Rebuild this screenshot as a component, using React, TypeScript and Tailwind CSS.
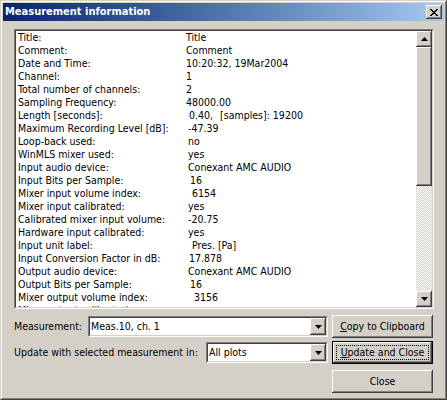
import type { ReactNode } from "react";

// Classic Windows "Measurement information" dialog.

const FONT = "font-['DejaVu_Sans_Condensed','DejaVu_Sans',sans-serif]";

const rows: { label: string; value: ReactNode; pad: string }[] = [
  { label: "Title:", value: "Title", pad: "pl-0" },
  { label: "Comment:", value: "Comment", pad: "pl-0" },
  { label: "Date and Time:", value: "10:20:32, 19Mar2004", pad: "pl-0" },
  { label: "Channel:", value: "1", pad: "pl-0" },
  { label: "Total number of channels:", value: "2", pad: "pl-0" },
  { label: "Sampling Frequency:", value: "48000.00", pad: "pl-0" },
  {
    label: "Length [seconds]:",
    value: (
      <>
        0.40,<span className="ml-[7px]">[samples]: 19200</span>
      </>
    ),
    pad: "pl-[3px]",
  },
  { label: "Maximum Recording Level [dB]:", value: "-47.39", pad: "pl-[2px]" },
  { label: "Loop-back used:", value: "no", pad: "pl-[2px]" },
  { label: "WinMLS mixer used:", value: "yes", pad: "pl-[2px]" },
  { label: "Input audio device:", value: "Conexant AMC AUDIO", pad: "pl-[2px]" },
  { label: "Input Bits per Sample:", value: "16", pad: "pl-[4px]" },
  { label: "Mixer input volume index:", value: "6154", pad: "pl-[6px]" },
  { label: "Mixer input calibrated:", value: "yes", pad: "pl-[2px]" },
  { label: "Calibrated mixer input volume:", value: "-20.75", pad: "pl-[2px]" },
  { label: "Hardware input calibrated:", value: "yes", pad: "pl-[2px]" },
  { label: "Input unit label:", value: "Pres. [Pa]", pad: "pl-[6px]" },
  { label: "Input Conversion Factor in dB:", value: "17.878", pad: "pl-[3px]" },
  { label: "Output audio device:", value: "Conexant AMC AUDIO", pad: "pl-[2px]" },
  { label: "Output Bits per Sample:", value: "16", pad: "pl-[4px]" },
  { label: "Mixer output volume index:", value: "3156", pad: "pl-[8px]" },
  { label: "Mixer output calibrated:", value: "yes", pad: "pl-[2px]" },
];

const RAISED =
  "bg-[#d4d0c8] shadow-[inset_-1px_-1px_#404040,inset_1px_1px_#ffffff,inset_-2px_-2px_#808080,inset_2px_2px_#d4d0c8]";

function Arrow({ up = false }: { up?: boolean }) {
  return (
    <svg width="7" height="4" viewBox="0 0 7 4" className="block">
      {up ? <path d="M3.5 0 L7 4 L0 4 Z" fill="#000" /> : <path d="M0 0 L7 0 L3.5 4 Z" fill="#000" />}
    </svg>
  );
}

function Sunken({ className, children }: { className?: string; children: ReactNode }) {
  return (
    <div className={`border border-t-[#808080] border-l-[#808080] border-b-[#ffffff] border-r-[#ffffff] ${className ?? ""}`}>
      <div className="flex h-full w-full border border-t-[#404040] border-l-[#404040] border-b-[#d4d0c8] border-r-[#d4d0c8] bg-white">
        {children}
      </div>
    </div>
  );
}

function Combo({ width, value }: { width: string; value: string }) {
  return (
    <Sunken className={`${width} h-[21px]`}>
      <span className="flex-1 pl-[1px] leading-[17px]">{value}</span>
      <div className={`${RAISED} flex h-[17px] w-[16px] items-center justify-center`}>
        <Arrow />
      </div>
    </Sunken>
  );
}

function Button({ children, isDefault = false }: { children: ReactNode; isDefault?: boolean }) {
  if (isDefault)
    return (
      <div className="h-[23px] w-[101px] border border-black">
        <div className={`${RAISED} flex h-full w-full items-center justify-center p-[3px]`}>
          <div className="flex h-full w-full items-center justify-center border border-dotted border-black">
            {children}
          </div>
        </div>
      </div>
    );
  return (
    <div className={`${RAISED} flex h-[23px] w-[101px] items-center justify-center`}>{children}</div>
  );
}

export default function App() {
  return (
    <div
      className={`${FONT} h-[400px] w-[447px] border border-t-[#d4d0c8] border-l-[#d4d0c8] border-b-[#404040] border-r-[#404040] text-[10.5px] text-black`}
    >
      <div className="h-full w-full border border-t-[#ffffff] border-l-[#ffffff] border-b-[#808080] border-r-[#808080] bg-[#d4d0c8] p-px">
        {/* Title bar */}
        <div className="flex h-[18px] items-center justify-between bg-gradient-to-r from-[#0a246a] to-[#a6caf0] pl-[2px] pr-[2px]">
          <span className="text-[11px] font-bold text-white">Measurement information</span>
          <div className={`${RAISED} flex h-[14px] w-[16px] items-center justify-center`}>
            <svg width="8" height="7" viewBox="0 0 8 7" className="block">
              <path d="M0 0h2v1h-2zM6 0h2v1h-2zM1 1h2v1h-2zM5 1h2v1h-2zM2 2h4v1h-4zM3 3h2v1h-2zM2 4h4v1h-4zM1 5h2v1h-2zM5 5h2v1h-2zM0 6h2v1h-2zM6 6h2v1h-2z" fill="#000" />
            </svg>
          </div>
        </div>

        <div className="pl-[11px] pt-[8px]">
          {/* Info list */}
          <Sunken className="h-[280px] w-[420px]">
            <div className="flex-1 overflow-hidden">
              {rows.map((r) => (
                <div key={r.label} className="flex h-[13px] items-center whitespace-nowrap leading-[13px]">
                  <span className="w-[170px] shrink-0 pl-[2px]">{r.label}</span>
                  <span className={r.pad}>{r.value}</span>
                </div>
              ))}
            </div>
            <div className="flex w-[16px] flex-col">
              <div className={`${RAISED} flex h-[16px] items-center justify-center`}>
                <Arrow up />
              </div>
              <div className={`${RAISED} h-[139px]`} />
              <div className="flex-1 bg-[repeating-conic-gradient(#d4d0c8_0%_25%,#ffffff_0%_50%)] bg-[length:2px_2px]" />
              <div className={`${RAISED} flex h-[16px] items-center justify-center`}>
                <Arrow />
              </div>
            </div>
          </Sunken>

          {/* Controls */}
          <div className="mt-[6px] flex h-[23px] w-[419px] items-center">
            <span>Measurement:</span>
            <div className="ml-auto">
              <Combo width="w-[240px]" value="Meas.10, ch. 1" />
            </div>
            <div className="ml-[4px]">
              <Button>
                <span>
                  <span className="underline">C</span>opy to Clipboard
                </span>
              </Button>
            </div>
          </div>

          <div className="mt-[3px] flex h-[23px] w-[419px] items-center">
            <span>Update with selected measurement in:</span>
            <div className="ml-auto">
              <Combo width="w-[122px]" value="All plots" />
            </div>
            <div className="ml-[4px]">
              <Button isDefault>
                <span>
                  <span className="underline">U</span>pdate and Close
                </span>
              </Button>
            </div>
          </div>

          <div className="mt-[6px] flex w-[419px] justify-end">
            <Button>Close</Button>
          </div>
        </div>
      </div>
    </div>
  );
}
